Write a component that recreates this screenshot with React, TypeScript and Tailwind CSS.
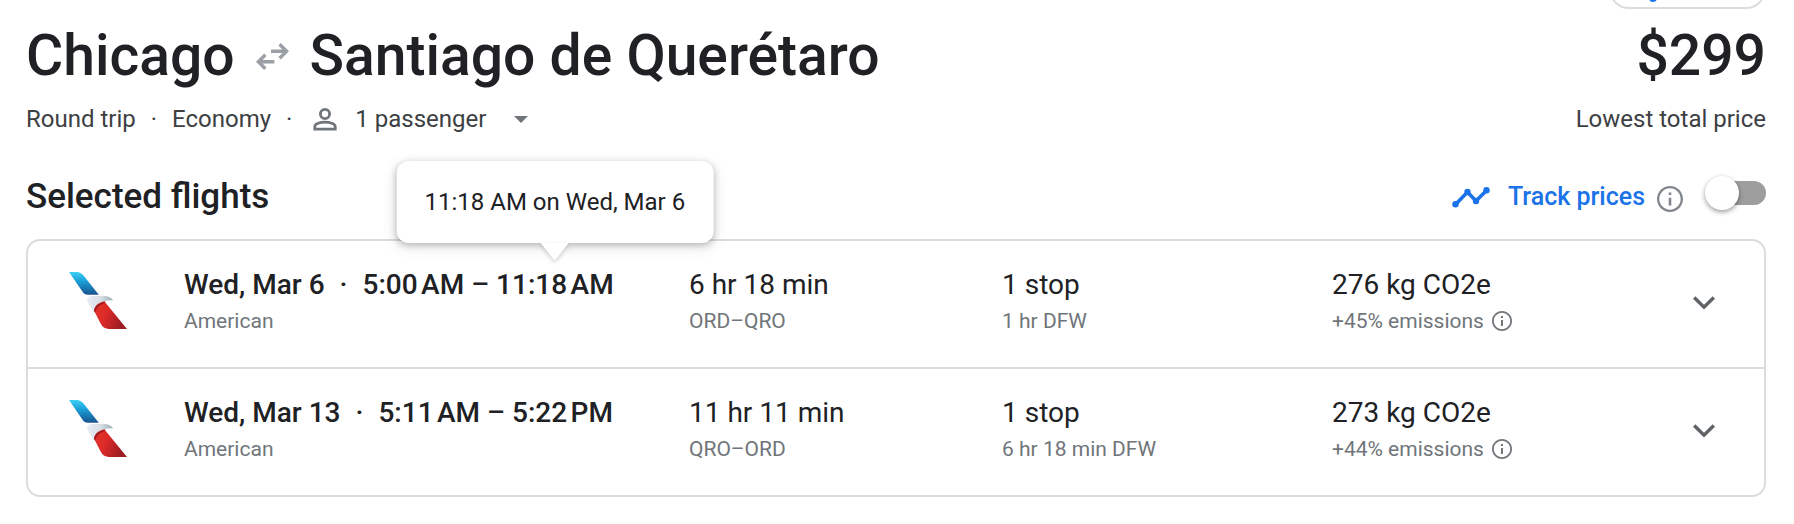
import { useState } from "react";

type Flight = {
  date: string;
  depart: string;
  arrive: string;
  arriveHint?: string;
  airline: string;
  duration: string;
  route: string;
  stops: string;
  layover: string;
  co2: string;
  emissions: string;
};

const flights: Flight[] = [
  {
    date: "Wed, Mar 6",
    depart: "5:00\u202fAM",
    arrive: "11:18\u202fAM",
    arriveHint: "11:18 AM on Wed, Mar 6",
    airline: "American",
    duration: "6 hr 18 min",
    route: "ORD–QRO",
    stops: "1 stop",
    layover: "1 hr DFW",
    co2: "276 kg CO2e",
    emissions: "+45% emissions",
  },
  {
    date: "Wed, Mar 13",
    depart: "5:11\u202fAM",
    arrive: "5:22\u202fPM",
    airline: "American",
    duration: "11 hr 11 min",
    route: "QRO–ORD",
    stops: "1 stop",
    layover: "6 hr 18 min DFW",
    co2: "273 kg CO2e",
    emissions: "+44% emissions",
  },
];

function SwapIcon() {
  return (
    <svg className="h-[27px] w-[33px]" viewBox="0 0 33 27" fill="none" stroke="#9aa0a6" strokeWidth="3.4" aria-hidden="true">
      <path d="M15 8.2h16M23.6 1.2l7 7-7 7M18.4 18.8H2.4M9.4 11.8l-7 7 7 7" />
    </svg>
  );
}

function InfoIcon({ className }: { className: string }) {
  return (
    <svg className={className} viewBox="2 2 20 20" fill="currentColor" aria-hidden="true">
      <path d="M11 7h2v2h-2zm0 4h2v6h-2zm1-9C6.48 2 2 6.48 2 12s4.48 10 10 10 10-4.48 10-10S17.52 2 12 2zm0 18.2c-4.52 0-8.2-3.68-8.2-8.2S7.48 3.8 12 3.8s8.2 3.68 8.2 8.2-3.68 8.2-8.2 8.2z" />
    </svg>
  );
}

function PersonIcon() {
  return (
    <svg className="h-[23px] w-6" viewBox="0 0 24 23" fill="none" stroke="#70757a" strokeWidth="2.8" aria-hidden="true">
      <circle cx="12" cy="6" r="4.6" />
      <path d="M1.8 21.2v-2.7c0-2.8 5.6-4.3 10.2-4.3s10.2 1.5 10.2 4.3v2.7z" />
    </svg>
  );
}

function TrendIcon() {
  return (
    <svg className="h-[21px] w-[38px]" viewBox="0 0 38 21" fill="#1a73e8" aria-hidden="true">
      <path d="M3.5 17.5 15.5 5l8.500 9L34.500 3.500" fill="none" stroke="#1a73e8" strokeWidth="3.6" />
      <circle cx="3.5" cy="17.3" r="3.2" />
      <circle cx="15.5" cy="5" r="3.2" />
      <circle cx="24" cy="14" r="3.2" />
      <circle cx="34.5" cy="3.3" r="3.2" />
    </svg>
  );
}

function AmericanLogo() {
  return (
    <svg className="h-[57px] w-[58px]" viewBox="0 0 58 57" role="img" aria-label="American">
      <defs>
        <linearGradient id="aaBlue" x1="0" y1="0" x2="0" y2="1">
          <stop offset="0" stopColor="#3fd0f5" />
          <stop offset="0.4" stopColor="#1b9fd8" />
          <stop offset="1" stopColor="#17528f" />
        </linearGradient>
        <linearGradient id="aaSilver" x1="0" y1="0" x2="1" y2="0">
          <stop offset="0" stopColor="#e9eef4" />
          <stop offset="0.55" stopColor="#d5dce2" />
          <stop offset="1" stopColor="#9aabb3" />
        </linearGradient>
        <linearGradient id="aaRed" x1="0" y1="0" x2="1" y2="0.3">
          <stop offset="0" stopColor="#e8332b" />
          <stop offset="0.45" stopColor="#dc2a28" />
          <stop offset="1" stopColor="#9c1d24" />
        </linearGradient>
      </defs>
      <path d="M0 0h7.500c3.500 0 6 1.500 8 4.800L29.800 22.800H19c-3 0-4.600-1.400-6-3.800z" fill="url(#aaBlue)" />
      <path d="M25 41 19 30.500c-1.800-3.600-.4-6.500 4.400-6.500H34c5.500 0 9 1.800 10 4.700-3.500-1-6.500-.4-9 1.200-4.500 2.600-8 5.600-10 11.100z" fill="url(#aaSilver)" />
      <path d="M35.500 29.500 58 57H40c-4.300 0-6.600-1.800-8.400-5.400L25 38.500c.8-4.700 5-8 10.500-9z" fill="url(#aaRed)" />
      <path d="M25 38.500c.8-4.700 5-8 10.500-9l1 1.200c-5.500 1.800-8.900 5-10.200 10.300z" fill="#a81c20" />
    </svg>
  );
}

function Tooltip({ text }: { text: string }) {
  return (
    <span
      role="tooltip"
      className="absolute bottom-full left-1/2 z-10 mb-[22px] -translate-x-1/2 rounded-xl bg-white px-7 py-[25px] text-2xl leading-8 font-normal whitespace-nowrap shadow-[0_2px_6px_rgba(60,64,67,0.3),0_4px_14px_rgba(60,64,67,0.15)]"
    >
      {text}
      <svg className="absolute top-full left-1/2 h-[18px] w-7 -translate-x-1/2 drop-shadow-[0_2px_2px_rgba(60,64,67,0.25)]" viewBox="0 0 28 18" aria-hidden="true">
        <path d="M0 0h28L15.500 16q-1.500 2-3 0z" fill="#fff" />
      </svg>
    </span>
  );
}

function FlightRow({ flight }: { flight: Flight }) {
  return (
    <li className="grid grid-cols-[156px_505fr_313fr_330fr_432fr] pt-6 pb-[30px]">
      <div className="pt-[7px] pl-[41px]">
        <AmericanLogo />
      </div>
      <div>
        <div className="flex text-[28px] leading-10 font-medium whitespace-nowrap">
          <span>{flight.date}</span>
          <span className="px-[15px]">·</span>
          <span>{flight.depart}&nbsp;–&nbsp;</span>
          <span className="relative">
            {flight.arrive}
            {flight.arriveHint && <Tooltip text={flight.arriveHint} />}
          </span>
        </div>
        <div className="text-[21px] leading-8 text-[#70757a]">{flight.airline}</div>
      </div>
      <div>
        <div className="text-[28px] leading-10">{flight.duration}</div>
        <div className="text-[21px] leading-8 text-[#70757a]">{flight.route}</div>
      </div>
      <div>
        <div className="text-[28px] leading-10">{flight.stops}</div>
        <div className="text-[21px] leading-8 text-[#70757a]">{flight.layover}</div>
      </div>
      <div className="flex items-start justify-between pr-10">
        <div>
          <div className="text-[28px] leading-10">{flight.co2}</div>
          <div className="flex items-center gap-2 text-[21px] leading-8 text-[#70757a]">
            {flight.emissions}
            <button type="button" aria-label="Emissions information">
              <InfoIcon className="block size-5" />
            </button>
          </div>
        </div>
        <button type="button" aria-label="Show flight details" className="mt-[18px] p-2">
          <svg className="h-6 w-6" viewBox="0 0 24 24" fill="none" stroke="#5f6368" strokeWidth="3.4" aria-hidden="true">
            <path d="M2.200 6.500 12 16.200l9.800-9.700" />
          </svg>
        </button>
      </div>
    </li>
  );
}

export default function App() {
  const [tracking, setTracking] = useState(false);

  return (
    <main className="bg-white pr-7 pl-[26px] font-['Roboto',sans-serif] text-[#202124]">
      <div className="flex h-[9px] items-end justify-end overflow-hidden">
        <button type="button" aria-label="Share" className="flex h-10 w-[157px] shrink-0 items-end rounded-[20px] border-2 border-[#dadce0] pb-[5px] pl-[38px]">
          <svg className="h-6 w-6" viewBox="0 0 24 24" fill="#1a73e8" stroke="#1a73e8" strokeWidth="2" aria-hidden="true">
            <path d="M4 20 20 4" />
            <circle cx="4" cy="20" r="3" />
            <circle cx="20" cy="4" r="3" />
          </svg>
        </button>
      </div>

      <header className="mt-[15px]">
        <div className="flex items-center justify-between text-[57px] leading-[64px] font-medium">
          <h1 className="flex items-center gap-[21px]">
            <span>Chicago</span>
            <SwapIcon />
            <span>Santiago de Querétaro</span>
          </h1>
          <div>$299</div>
        </div>
        <div className="mt-[15px] flex items-center justify-between text-2xl leading-8 text-[#3c4043]">
          <div className="flex items-center">
            <span>Round trip</span>
            <span className="px-[15px]">·</span>
            <span>Economy</span>
            <span className="px-[15px]">·</span>
            <button type="button" className="ml-1.5 flex items-center">
              <PersonIcon />
              <span className="ml-[18px]">1 passenger</span>
              <svg className="ml-7 h-[7px] w-[14px]" viewBox="0 0 14 7" fill="#70757a" aria-hidden="true">
                <path d="M0 0h14L7 7z" />
              </svg>
            </button>
          </div>
          <div>Lowest total price</div>
        </div>
      </header>

      <section className="mt-10">
        <div className="mb-5 flex items-center justify-between">
          <h2 className="text-[35px] leading-[44px] font-medium">Selected flights</h2>
          <div className="flex items-center">
            <TrendIcon />
            <label htmlFor="track" className="ml-[18px] text-[25px] leading-8 font-medium text-[#1a73e8]">
              Track prices
            </label>
            <button type="button" aria-label="About price tracking" className="mt-1 ml-3 text-[#80868b]">
              <InfoIcon className="block size-[26px]" />
            </button>
            <span className="relative mb-2 ml-[22px] flex h-[34px] w-[61px] items-center">
              <input
                id="track"
                type="checkbox"
                role="switch"
                checked={tracking}
                onChange={(e) => setTracking(e.target.checked)}
                className="peer ml-1 h-6 w-full appearance-none rounded-full bg-[#9e9e9e] checked:bg-[#8ab4f8]"
              />
              <span className="pointer-events-none absolute top-0 left-0 size-[34px] rounded-full bg-white shadow-[0_2px_5px_rgba(0,0,0,0.4)] peer-checked:left-[27px]" />
            </span>
          </div>
        </div>

        <ul className="divide-y-2 divide-[#dadce0] rounded-[14px] border-2 border-[#dadce0]">
          {flights.map((f) => (
            <FlightRow key={f.date} flight={f} />
          ))}
        </ul>
      </section>
    </main>
  );
}
